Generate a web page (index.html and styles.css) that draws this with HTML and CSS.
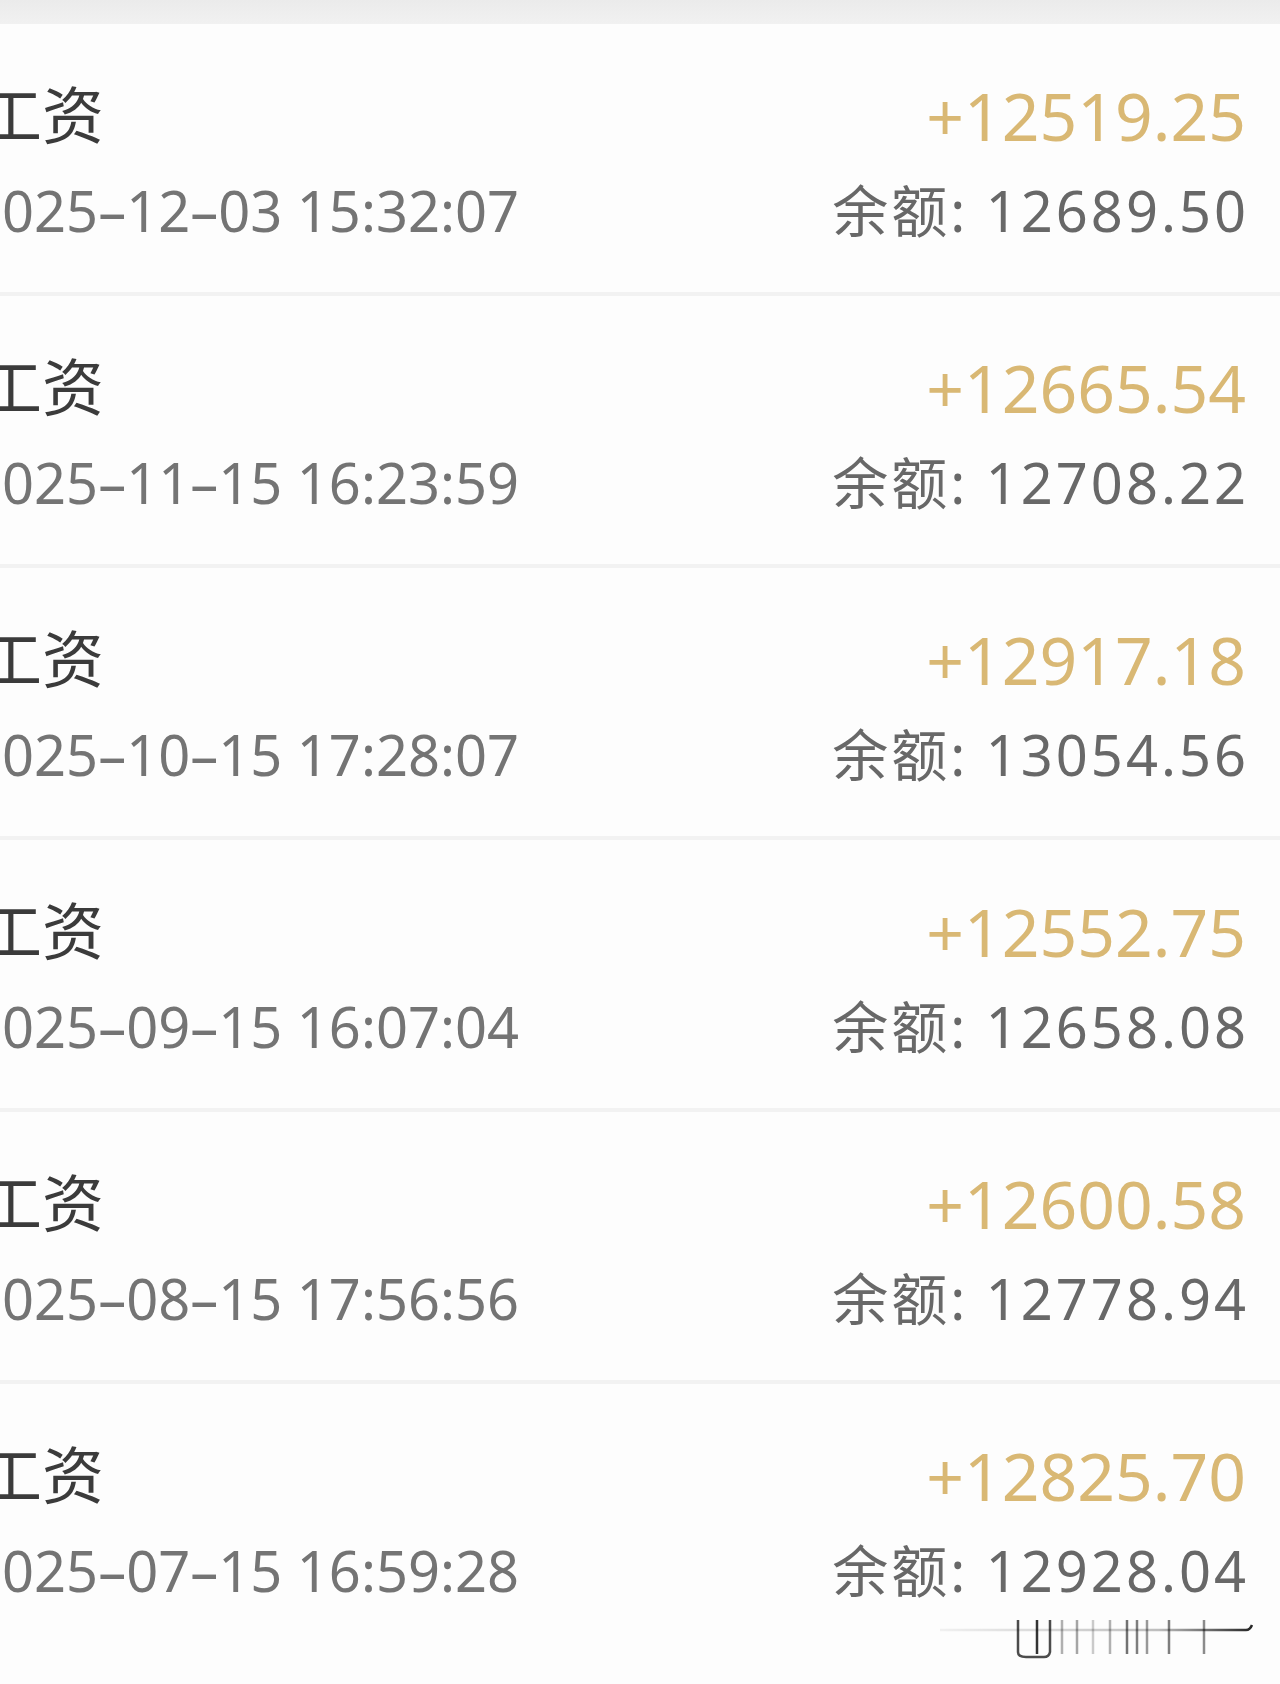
FILE: index.html
```html
<!DOCTYPE html>
<html lang="zh-CN">

<head>
    <meta charset="UTF-8">
    <meta name="viewport" content="width=device-width, initial-scale=1.0">
    <title>账单明细</title>
    <link rel="stylesheet" href="styles.css">
</head>

<body>

    <!-- top strip -->
    <div class="top-strip"></div>

    <ul class="bill-list">
        <li class="bill-item">
            <div class="bill-left">
                <div class="bill-title">工资</div>
                <div class="bill-time">2025–12–03 15:32:07</div>
            </div>
            <div class="bill-right">
                <div class="bill-amount">+12519.25</div>
                <div class="bill-balance">余额: 12689.50</div>
            </div>
        </li>
        <li class="bill-item">
            <div class="bill-left">
                <div class="bill-title">工资</div>
                <div class="bill-time">2025–11–15 16:23:59</div>
            </div>
            <div class="bill-right">
                <div class="bill-amount">+12665.54</div>
                <div class="bill-balance">余额: 12708.22</div>
            </div>
        </li>
        <li class="bill-item">
            <div class="bill-left">
                <div class="bill-title">工资</div>
                <div class="bill-time">2025–10–15 17:28:07</div>
            </div>
            <div class="bill-right">
                <div class="bill-amount">+12917.18</div>
                <div class="bill-balance">余额: 13054.56</div>
            </div>
        </li>
        <li class="bill-item">
            <div class="bill-left">
                <div class="bill-title">工资</div>
                <div class="bill-time">2025–09–15 16:07:04</div>
            </div>
            <div class="bill-right">
                <div class="bill-amount">+12552.75</div>
                <div class="bill-balance">余额: 12658.08</div>
            </div>
        </li>
        <li class="bill-item">
            <div class="bill-left">
                <div class="bill-title">工资</div>
                <div class="bill-time">2025–08–15 17:56:56</div>
            </div>
            <div class="bill-right">
                <div class="bill-amount">+12600.58</div>
                <div class="bill-balance">余额: 12778.94</div>
            </div>
        </li>
        <li class="bill-item">
            <div class="bill-left">
                <div class="bill-title">工资</div>
                <div class="bill-time">2025–07–15 16:59:28</div>
            </div>
            <div class="bill-right">
                <div class="bill-amount">+12825.70</div>
                <div class="bill-balance">余额: 12928.04</div>
            </div>
        </li>
    </ul>

    <!-- scratch mark at the bottom of the shot -->
    <svg class="scratch" width="320" height="44" viewBox="0 0 320 44">
        <defs>
            <linearGradient id="fade" x1="0" y1="0" x2="1" y2="0">
                <stop offset="0" stop-color="#000" stop-opacity="0.05" />
                <stop offset="0.7" stop-color="#000" stop-opacity="0.25" />
                <stop offset="1" stop-color="#000" stop-opacity="0.85" />
            </linearGradient>
            <linearGradient id="fade2" x1="0" y1="0" x2="1" y2="0">
                <stop offset="0" stop-color="#000" stop-opacity="0.8" />
                <stop offset="0.3" stop-color="#000" stop-opacity="0.2" />
                <stop offset="0.7" stop-color="#000" stop-opacity="0.3" />
                <stop offset="1" stop-color="#000" stop-opacity="0.8" />
            </linearGradient>
        </defs>
        <path d="M4 12 H310 Q314 12 316 7" fill="none" stroke="url(#fade)" stroke-width="2.5" />
        <path d="M4 25 H312" fill="none" stroke="url(#fade2)" stroke-width="2" />
        <path d="M4 34 H314" fill="none" stroke="url(#fade)" stroke-width="2" />
        <g stroke="#000" stroke-width="2.5" fill="none">
            <path d="M82 2 V34 Q82 39 90 39 H108 Q113 39 114 34 V2" stroke-opacity="0.7" />
            <path d="M101 2 V36" stroke-opacity="0.8" />
            <path d="M126 2 V36" stroke-opacity="0.3" />
            <path d="M141 2 V36" stroke-opacity="0.35" />
            <path d="M157 2 V36" stroke-opacity="0.2" />
            <path d="M174 2 V36" stroke-opacity="0.3" />
            <path d="M191 2 V36" stroke-opacity="0.55" />
            <path d="M201 2 V36" stroke-opacity="0.5" />
            <path d="M211 2 V36" stroke-opacity="0.4" />
            <path d="M233 2 V36" stroke-opacity="0.5" />
            <path d="M268 2 V36" stroke-opacity="0.45" />
        </g>
    </svg>

</body>

</html>
```

FILE: styles.css
```css
body {
    margin: 0;
    padding: 0;
    font-family: "Noto Sans", "Noto Sans CJK SC", sans-serif;
    background-color: #fdfdfd;
    overflow: hidden;
}

/* light gray strip at the top */
.top-strip {
    height: 24px;
    background: linear-gradient(to bottom, #ebebeb, #f1f1f1);
}

.bill-list {
    list-style: none;
    margin: 0;
    padding: 0;
}

.bill-item {
    box-sizing: border-box;
    height: 272px;
    display: flex;
    justify-content: space-between;
    align-items: flex-start;
    padding: 56px 34px 0 0;
    border-bottom: 4px solid #f2f2f2;
}

.bill-item:last-child {
    border-bottom: none;
}

.bill-left {
    margin-left: -20px;
}

.bill-title {
    font-size: 62px;
    line-height: 70px;
    color: #3b3b3b;
}

.bill-time {
    margin-top: 28px;
    margin-left: -10px;
    font-size: 56px;
    line-height: 64px;
    color: #747474;
}

.bill-right {
    text-align: right;
}

.bill-amount {
    font-size: 66px;
    line-height: 70px;
    color: #d9b874;
}

.bill-balance {
    margin-top: 28px;
    margin-right: -3px;
    font-size: 56px;
    line-height: 64px;
    letter-spacing: 3px;
    word-spacing: 0;
    color: #686868;
}

.scratch {
    position: absolute;
    left: 936px;
    top: 1618px;
}
```
